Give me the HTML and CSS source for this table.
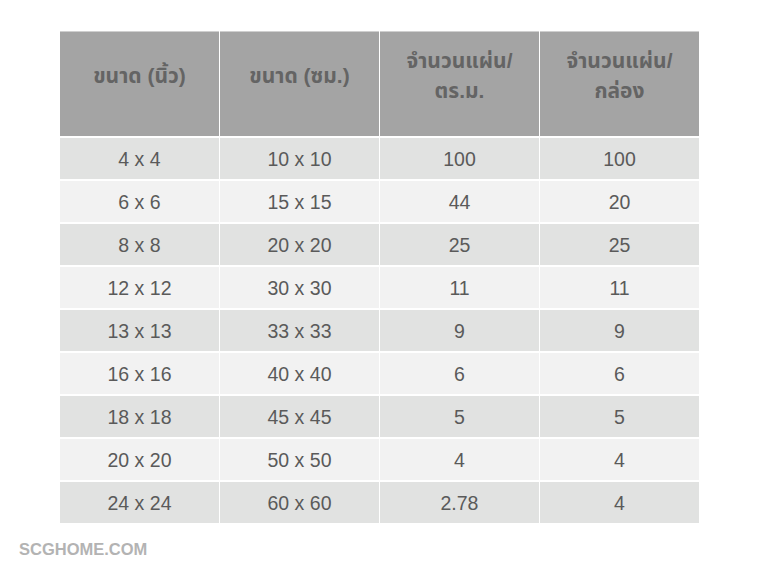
FILE: index.html
```html
<!DOCTYPE html>
<html lang="th">
<head>
<meta charset="utf-8">
<title>ขนาดกระเบื้อง</title>
<link rel="stylesheet" href="styles.css">
</head>
<body>
<div class="page">
  <div class="table">
    <div class="cell head"><span>ขนาด (นิ้ว)</span></div>
    <div class="cell head"><span>ขนาด (ซม.)</span></div>
    <div class="cell head"><span>จำนวนแผ่น/<br>ตร.ม.</span></div>
    <div class="cell head"><span>จำนวนแผ่น/<br>กล่อง</span></div>

    <div class="cell odd">4 x 4</div><div class="cell odd">10 x 10</div><div class="cell odd">100</div><div class="cell odd">100</div>
    <div class="cell even">6 x 6</div><div class="cell even">15 x 15</div><div class="cell even">44</div><div class="cell even">20</div>
    <div class="cell odd">8 x 8</div><div class="cell odd">20 x 20</div><div class="cell odd">25</div><div class="cell odd">25</div>
    <div class="cell even">12 x 12</div><div class="cell even">30 x 30</div><div class="cell even">11</div><div class="cell even">11</div>
    <div class="cell odd">13 x 13</div><div class="cell odd">33 x 33</div><div class="cell odd">9</div><div class="cell odd">9</div>
    <div class="cell even">16 x 16</div><div class="cell even">40 x 40</div><div class="cell even">6</div><div class="cell even">6</div>
    <div class="cell odd">18 x 18</div><div class="cell odd">45 x 45</div><div class="cell odd">5</div><div class="cell odd">5</div>
    <div class="cell even">20 x 20</div><div class="cell even">50 x 50</div><div class="cell even">4</div><div class="cell even">4</div>
    <div class="cell odd">24 x 24</div><div class="cell odd">60 x 60</div><div class="cell odd">2.78</div><div class="cell odd">4</div>
  </div>
  <div class="brand">SCGHOME.COM</div>
</div>
</body>
</html>
```
FILE: styles.css
```css
* { box-sizing: border-box; }
html, body { margin: 0; padding: 0; background: #ffffff; }
body {
  width: 759px;
  height: 569px;
  overflow: hidden;
  font-family: "Liberation Sans", Arial, "Noto Sans Thai", "Noto Sans", sans-serif;
}
.page {
  padding: 31px 60px 0 60px;
}
.table {
  width: 639px;
  display: grid;
  grid-template-columns: repeat(4, 159px);
  grid-template-rows: 105px repeat(9, 41px);
  column-gap: 1px;
  row-gap: 2px;
}
.cell {
  display: flex;
  align-items: center;
  justify-content: center;
  text-align: center;
  font-size: 19.5px;
  color: #5a5a5a;
  padding-top: 1px;
}
.head {
  background: #a4a4a4;
  border-top: 1px solid #cfcfcf;
  color: #646464;
  font-weight: bold;
  font-size: 21px;
  line-height: 30px;
  padding: 14px 6px 30px;
}
.odd { background: #e1e2e1; }
.even { background: #f2f2f2; }
.brand {
  margin: 17px 0 0 -41px;
  font-size: 16.5px;
  font-weight: bold;
  color: #b3b3b3;
}
```
